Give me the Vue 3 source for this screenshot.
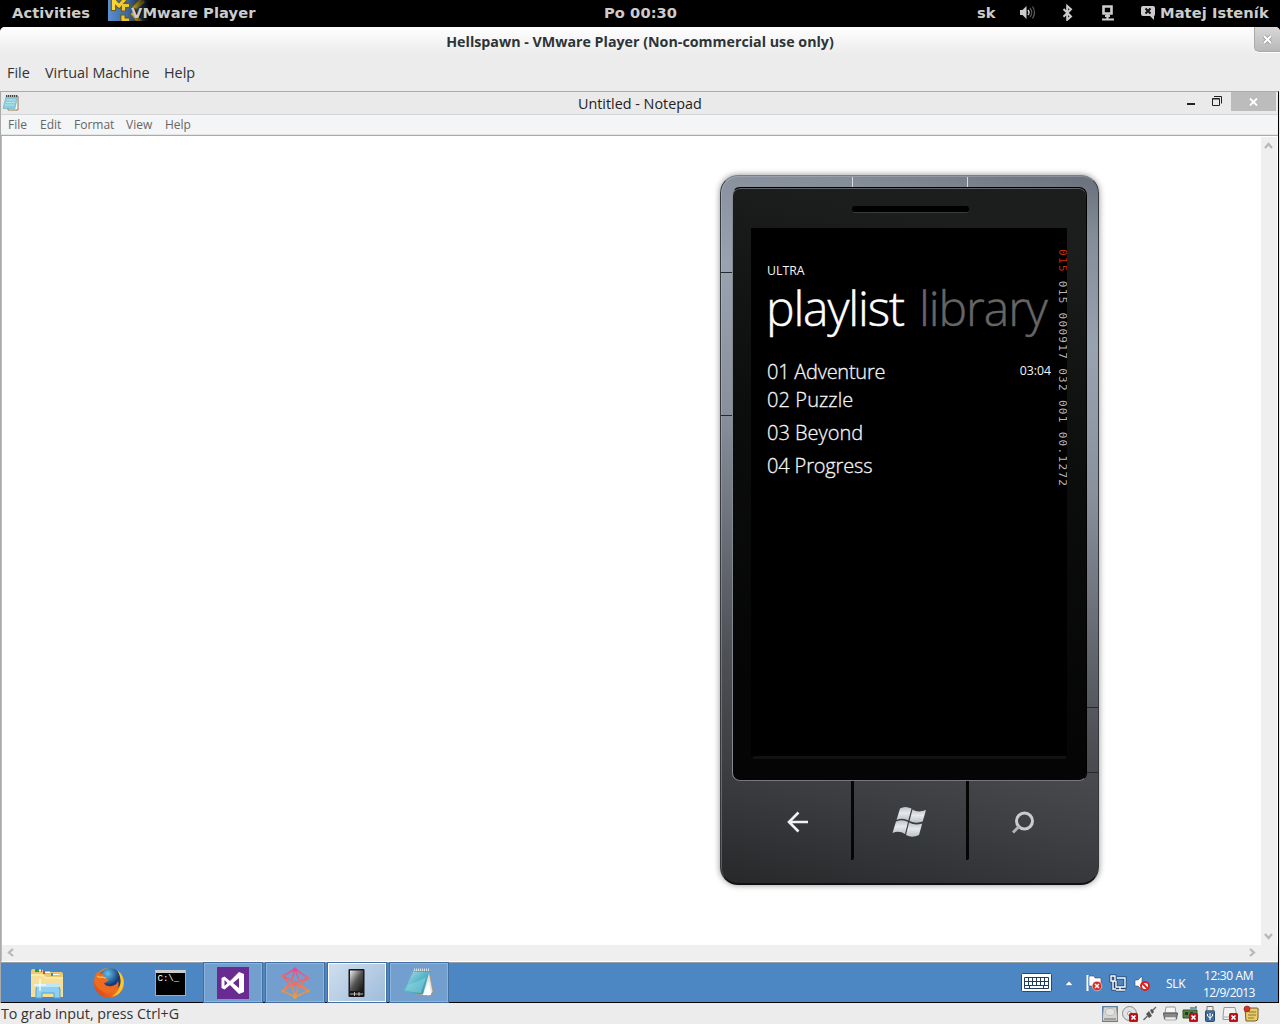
<script setup>
const tracks = ['01 Adventure', '02 Puzzle', '03 Beyond', '04 Progress']
const menus = ['File', 'Edit', 'Format', 'View', 'Help']
</script>

<template>
  <div class="desktop">
    <header class="panel">
      <span class="activities">Activities</span>
      <svg class="app-mark" width="44" height="26" viewBox="0 0 44 26">
        <defs>
          <linearGradient id="markBg" x1="0" y1="0" x2="1" y2="0"><stop offset="0" stop-color="#5b8fd0" /><stop offset=".45" stop-color="#3d699f" /><stop offset=".95" stop-color="#000" /></linearGradient>
          <linearGradient id="markLine" x1="0" y1="0" x2="44" y2="0" gradientUnits="userSpaceOnUse"><stop offset="0" stop-color="#ffdc3c" /><stop offset=".5" stop-color="#e8c12c" /><stop offset=".9" stop-color="#000" /></linearGradient>
        </defs>
        <rect width="44" height="26" fill="url(#markBg)" />
        <g fill="none" stroke-linejoin="round">
          <path d="M5.500 11V0L11 6 17 -1M22 5.500h-6.500v6M15 14.500v5.500h7M25 9l10-9M24 13l10 12" stroke="#695817" stroke-width="5.500" />
          <path d="M5.500 10V0L11 6 17 -1M21 5.500h-5.500v5M15 15.500v4.500h6M25 9l10-9M24 13l10 12" stroke="url(#markLine)" stroke-width="3.200" />
        </g>
      </svg>
      <span class="app-name">VMware Player</span>
      <span class="clock">Po 00:30</span>
      <span class="layout">sk</span>
      <svg class="sys" width="93" height="20" viewBox="1019 3 93 20">
        <path d="M1020 10h2.500l4-4v13l-4-4h-2.500z" fill="#ccc" />
        <path d="M1028 10q2 2.500 0 5" fill="none" stroke="#ccc" stroke-width="1.500" />
        <path d="M1030 8q3.500 4.500 0 9M1032.500 6.500q4 6 0 12" fill="none" stroke="#555" stroke-width="1.300" />
        <path d="M1063.500 9l7.500 7.500-3.800 3.300V6l3.800 3.300-7.500 7.500" fill="none" stroke="#ccc" stroke-width="2" />
        <path d="M1103.500 6.500h8v7h-8z" fill="none" stroke="#ccc" stroke-width="2.600" /><path d="M1107.500 14v5M1102 19.500h12" fill="none" stroke="#ccc" stroke-width="2.200" />
        <path d="M1105 16h5" stroke="#ccc" stroke-width="2" />
      </svg>
      <svg class="chat" width="16" height="16" viewBox="0 0 16 16">
        <path d="M3 1h10q2 0 2 2v6q0 2-1 2v4l-4-4H3q-2 0-2-2V3q0-2 2-2z" fill="#ccc" />
        <path d="M5.500 3.500l5 5M10.500 3.500l-5 5" stroke="#111" stroke-width="2" />
      </svg>
      <span class="user">Matej Isteník</span>
    </header>

    <div class="host">
      <div class="host-title">
        <span>Hellspawn - VMware Player (Non-commercial use only)</span>
        <div class="host-close"><svg width="11" height="11" viewBox="0 0 11 11"><path d="M2 2l7 7M9 2l-7 7" stroke="#999" stroke-width="3.600" /><path d="M2 2l7 7M9 2l-7 7" stroke="#fff" stroke-width="2" /></svg></div>
      </div>
      <nav class="host-menu"><span class="hm1">File</span><span class="hm2">Virtual Machine</span><span>Help</span></nav>
    </div>

    <main class="guest">
      <div class="np-title">
        <svg class="np-icon" width="18" height="18" viewBox="0 0 18 18">
          <path d="M5 2h11v14H6z" fill="#fff" stroke="#95774d" />
          <path d="M4 3h11.500L13 14.500H1z" fill="#8accdb" stroke="#6fb5c6" stroke-width=".7" />
          <path d="M4.500 6h9M4 8.500h9M3 11h9" stroke="#b7e4ee" />
          <path d="M4 2h12" stroke="#444" stroke-width="2" stroke-dasharray="1 1" />
        </svg>
        <span class="np-caption">Untitled - Notepad</span>
        <svg class="np-controls" width="44" height="22" viewBox="1186 92 44 22">
          <path d="M1187 104h8" stroke="#222" stroke-width="2" />
          <path d="M1212.500 98.500h7v7h-7zM1212.500 99h7M1214 96.500h7.500v7" fill="none" stroke="#222" />
        </svg>
        <div class="np-close"><svg width="9" height="8" viewBox="0 0 9 8"><path d="M1 .5l7 7M8 .5l-7 7" stroke="#fff" stroke-width="1.800" /></svg></div>
      </div>
      <nav class="np-menu"><span v-for="m in menus" :key="m" :class="'m-' + m.toLowerCase()">{{ m }}</span></nav>

      <div class="editor">
        <div class="page">
          <section class="phone">
            <i class="notch n1"></i><i class="notch n2"></i>
            <i class="seam s1"></i><i class="seam s2"></i><i class="seam s3"></i><i class="seam s4"></i>
            <div class="glass">
              <div class="speaker"></div>
              <div class="screen">
                <div class="app">
                  <p class="brand">ULTRA</p>
                  <div class="pivot"><span class="on">playlist</span><span class="off">library</span></div>
                  <ul class="tracks">
                    <li v-for="(t, i) in tracks" :key="t"><span :class="'t' + i">{{ t }}</span><time v-if="i === 0">03:04</time></li>
                  </ul>
                </div>
                <div class="counters"><b>015</b> 015 000917 032 001 00.1272</div>
              </div>
              <div class="lip"></div>
            </div>
            <div class="keys">
              <div class="key back"><svg width="24" height="24" viewBox="0 0 24 24"><path d="M22 12H3M12.500 2.500L3 12l9.500 9.500" fill="none" stroke="#f0f1f3" stroke-width="2.600" /></svg></div>
              <div class="key start">
                <svg width="34" height="32" viewBox="0 0 34 32">
                  <defs><linearGradient id="flag" x1="0" y1="0" x2="0" y2="1"><stop offset="0" stop-color="#bfc3c7" /><stop offset=".45" stop-color="#e6e9ec" /><stop offset="1" stop-color="#b9c1c8" /></linearGradient></defs>
                  <g fill="url(#flag)">
                    <path d="M8 2.500Q13-.5 19.500 2.500L16.300 14.500Q11 11.500 4.500 14z" />
                    <path d="M20.500 3.500Q26 7 34 4L30.700 15.500Q24 18 17.500 15z" />
                    <path d="M4 15.500Q11 13 16 16L13 28Q7 24 .5 27z" />
                    <path d="M17 16.500Q23 20 30.200 17.500L27 29Q20 32.500 14 29z" />
                  </g>
                </svg>
              </div>
              <div class="key search"><svg width="24" height="24" viewBox="0 0 24 24"><circle cx="13.500" cy="11" r="8" fill="none" stroke="#c9cbce" stroke-width="3" /><path d="M8 16.500l-6 6" stroke="#b0b2b5" stroke-width="3" /></svg></div>
            </div>
          </section>
        </div>
        <div class="vscroll">
          <svg width="9" height="7" viewBox="0 0 9 7"><path d="M1 6l3.500-4L8 6" fill="none" stroke="#b7b7b7" stroke-width="2.200" /></svg>
          <svg width="9" height="7" viewBox="0 0 9 7"><path d="M1 1l3.500 4L8 1" fill="none" stroke="#b7b7b7" stroke-width="2.200" /></svg>
        </div>
      </div>
      <div class="hscroll">
        <svg width="7" height="9" viewBox="0 0 7 9"><path d="M6 1L2 4.500 6 8" fill="none" stroke="#b7b7b7" stroke-width="2.200" /></svg>
        <svg width="7" height="9" viewBox="0 0 7 9"><path d="M1 1l4 3.500L1 8" fill="none" stroke="#b7b7b7" stroke-width="2.200" /></svg>
      </div>

      <footer class="taskbar">
        <div class="task plain explorer">
          <svg width="34" height="32" viewBox="0 0 34 32">
            <path d="M1 4q0-2 2-2h9l2 3h17q2 0 2 2v22H1z" fill="#e9ca6c" />
            <path d="M5 2h7v3H5z" fill="#25a43a" /><path d="M13 4h7v3h-7z" fill="#d9442b" /><path d="M21 6h8v3h-8z" fill="#2e8fd2" />
            <path d="M9 2.500h2v2H9zM15 4.500h5v2h-5zM23 6.500h6v2h-6z" fill="#fff" />
            <path d="M1 7h12l3 3h17v20H1z" fill="#f5df98" /><path d="M1 8h12l3 3h17" fill="none" stroke="#fff1bd" />
            <path d="M6 31V22q0-3 3-3h17q4 0 4 3v9h-6v-5H12v5z" fill="#8fd0f1" stroke="#4da4d8" />
            <path d="M6 17h23v3H6z" fill="#bce6fa" /><path d="M10 12v12M4 18h12" stroke="#fff" stroke-width="1.200" />
          </svg>
        </div>
        <div class="task plain firefox">
          <svg width="32" height="32" viewBox="0 0 32 32">
            <defs><linearGradient id="fox" x1="1" y1="0" x2="0" y2="1"><stop offset="0" stop-color="#ffd43d" /><stop offset=".4" stop-color="#f58220" /><stop offset="1" stop-color="#d63a1b" /></linearGradient><radialGradient id="globe" cx=".4" cy=".25"><stop offset="0" stop-color="#5fc4ec" /><stop offset="1" stop-color="#173a78" /></radialGradient></defs>
            <circle cx="16" cy="16" r="15" fill="url(#fox)" />
            <circle cx="17" cy="12.500" r="11.500" fill="url(#globe)" />
            <path d="M1 13Q2 8 4 5l1 3q3-2 6-1-1 3 1 4l4 1q-1 3-5 4 2 4 8 3 5-1 6-5 2 5-2 9-7 6-14 1Q2 20 1 13z" fill="#ed6c20" />
            <path d="M24 3q7 5 6.500 14Q29 28 18 30q9-5 9.500-14Q28 9 24 3z" fill="#ffc629" />
            <path d="M4 9q2 2 5 1l4 1" fill="none" stroke="#f9b04b" stroke-width="1.500" />
          </svg>
        </div>
        <div class="task plain cmd">
          <div class="console">C:\_</div>
        </div>
        <div class="task open vs">
          <svg width="32" height="32" viewBox="0 0 32 32"><rect width="32" height="32" fill="#692b91" /><path d="M4.500 11l3-1.500 5.500 4.500 9-9 5 2v18l-5 2-9-9-5.500 4.500-3-1.500z" fill="#fff" /><path d="M7.500 13v6l3-3zM22 11l-6 5 6 5z" fill="#692b91" /></svg>
        </div>
        <div class="task open blend">
          <svg width="30" height="32" viewBox="0 0 30 32">
            <defs><linearGradient id="bl" x1="0" y1="0" x2="0" y2="1"><stop offset="0" stop-color="#e84a91" /><stop offset=".5" stop-color="#f06f61" /><stop offset="1" stop-color="#f59a35" /></linearGradient></defs>
            <g fill="none" stroke="url(#bl)" stroke-width="1.500"><path d="M15 2L3 9l12 7 13-5zM15 2l-4 14M15 2l4 11M15 16L3 24l12 6 13-6zM3 9l6 8-6 7M28 11l-7 6 7 7M11 16l4 14 4-13" /></g>
            <g fill="#f06a68"><circle cx="15" cy="2" r="1.800" fill="#e84a91" /><circle cx="3" cy="9" r="1.500" /><circle cx="28" cy="11" r="1.500" /><circle cx="15" cy="16" r="2.200" /><circle cx="3" cy="24" r="1.500" fill="#f58e45" /><circle cx="28" cy="24" r="1.500" fill="#f58e45" /><circle cx="15" cy="30" r="1.800" fill="#f59a35" /></g>
          </svg>
        </div>
        <div class="task active emu">
          <svg width="20" height="30" viewBox="0 0 20 30">
            <defs><linearGradient id="em" x1="0" y1="0" x2="1" y2="1"><stop offset="0" stop-color="#eee" /><stop offset=".5" stop-color="#555" /><stop offset="1" stop-color="#111" /></linearGradient></defs>
            <rect x="1.500" y="1" width="16" height="28" rx="1" fill="#181818" /><rect x="3" y="2.500" width="13" height="20.500" fill="url(#em)" /><path d="M3 26h13M7.500 24v4M12 24v4" stroke="#ddd" stroke-width=".8" />
          </svg>
        </div>
        <div class="task open pad">
          <svg width="34" height="32" viewBox="0 0 34 32">
            <defs><linearGradient id="nb" x1="0" y1="0" x2="1" y2="1"><stop offset="0" stop-color="#b7e3ec" /><stop offset=".5" stop-color="#58b6c9" /><stop offset="1" stop-color="#278ba9" /></linearGradient></defs>
            <path d="M27 4l4 21-4 4-13-2z" fill="#e6e6e0" stroke="#a69472" stroke-width=".8" /><path d="M21 28l6-14 2 14z" fill="#fff" />
            <path d="M12 3h16l-7 24q-9 1-19-3z" fill="url(#nb)" /><path d="M7 17q7-1 17-7l-5 16q-8 0-16-3z" fill="#9bdce5" opacity=".45" />
            <path d="M12 3h16" stroke="#ddd" stroke-width="3" stroke-dasharray="1 1" /><path d="M12 4.500h16" stroke="#777" stroke-width=".6" />
          </svg>
        </div>

        <svg class="tray" width="138" height="24" viewBox="1018 972 138 24">
          <rect x="1021.500" y="974.500" width="30" height="18" rx="1" fill="#fff" stroke="#284a70" />
          <path d="M1024.500 978.500h24v11h-24zM1024 982.500h25M1024 986.500h25M1028.500 978v8M1032.500 978v8M1036.500 978v8M1040.500 978v8M1044.500 978v8M1029.500 986v4M1043.500 986v4" fill="none" stroke="#203c60" />
          <path d="M1065 986.500l4-4.500 4 4.500z" fill="#fff" stroke="#3b679b" stroke-width=".5" />
          <path d="M1087.500 976v16" stroke="#fff" stroke-width="2" /><path d="M1089 977h5l1 2h6v8h-12z" fill="#fff" stroke="#304f72" stroke-width=".6" />
          <circle cx="1097" cy="987" r="4.800" fill="#d92b24" stroke="#fff" stroke-width=".5" /><path d="M1095 985l4 4m0-4l-4 4" stroke="#fff" stroke-width="1.500" />
          <path d="M1117 979h8v9h-9v-6M1120 988v3M1116 991h9M1111 977h4v5h-4zM1113 982v8h3" fill="none" stroke="#203f65" stroke-width="3" />
          <path d="M1117 979h8v9h-9v-6M1120 988v3M1116 991h9M1111 977h4v5h-4zM1113 982v8h3" fill="none" stroke="#fff" stroke-width="1.400" />
          <path d="M1135 981h3l4-4v14l-4-4h-3z" fill="#fff" stroke="#304f72" stroke-width=".6" />
          <circle cx="1145" cy="987" r="4" fill="#fff" stroke="#e0201d" stroke-width="2" /><path d="M1142 984l6 6" stroke="#e0201d" stroke-width="2" />
        </svg>
        <span class="lang">SLK</span>
        <div class="datetime"><span class="tm">12:30 AM</span><span class="dt">12/9/2013</span></div>
      </footer>
    </main>

    <footer class="status">
      <span>To grab input, press Ctrl+G</span>
      <svg width="160" height="18" viewBox="1101 1005 160 18">
        <rect x="1102" y="1006" width="16" height="16" fill="#5b86b4" /><path d="M1103.500 1007h13l1 10v4h-15v-4z" fill="#d4d4d2" stroke="#777" stroke-width=".6" /><ellipse cx="1110" cy="1012" rx="4.500" ry="3.500" fill="#e4e4e2" stroke="#bbb" /><path d="M1104 1019h12" stroke="#666" />
        <circle cx="1129.500" cy="1013.500" r="7" fill="#e3e3e3" stroke="#888" /><circle cx="1129.500" cy="1013.500" r="2" fill="#fff" stroke="#999" />
        <path d="M1143.500 1020l4-4M1152 1011l4-4" stroke="#666" stroke-width="1.400" /><path d="M1146 1014l3-3 3 5-3 2zM1150 1010l2-1 2 3-2 2z" fill="#555" />
        <path d="M1166 1007h9l1 6h-11z" fill="#f7f7f7" stroke="#999" /><path d="M1163.500 1013h14l-1 6h-12z" fill="#888" stroke="#555" /><path d="M1165 1017h11v3h-11z" fill="#eee" stroke="#888" stroke-width=".6" />
        <path d="M1183 1010h14v8h-14z" fill="#567e42" stroke="#33572a" /><path d="M1185 1012h3v3h-3zM1190 1012h3v3h-3z" fill="#263b24" /><path d="M1190 1008h6v-2" fill="none" stroke="#527ca0" stroke-width="1.500" />
        <rect x="1205.500" y="1010.500" width="9" height="11" rx="1" fill="#426b9a" stroke="#264d79" /><path d="M1207 1006.500h6v4h-6z" fill="#eee" stroke="#777" /><path d="M1210 1013v7M1207.500 1014v2l2.500 2 2.500-2v-2" fill="none" stroke="#fff" />
        <path d="M1224 1007.500h11l2 9v3h-14v-3z" fill="#f2f2f2" stroke="#999" /><path d="M1223 1017h14" stroke="#aaa" />
        <path d="M1245 1008h12q2 0 1 3v7q0 3-3 3h-9z" fill="#e8cc68" stroke="#755e23" /><path d="M1249 1012h7M1248 1015h8M1248 1018h6" stroke="#8d7435" /><circle cx="1247" cy="1009" r="3" fill="#ce3532" stroke="#8a1414" stroke-width=".6" />
        <g v-for="x in [1129, 1189, 1229]" :key="x"><rect :x="x" y="1013" width="9" height="9" rx="1.500" fill="#be1117" /><path :d="`M${x + 2.5} 1015.5l4 4m0-4l-4 4`" stroke="#fff" stroke-width="1.600" /></g>
      </svg>
    </footer>
  </div>
</template>

<style>
body { margin: 0; overflow: hidden; }
</style>

<style scoped>
* { box-sizing: border-box; }
span, time { white-space: nowrap; }
.desktop { width: 1280px; height: 1024px; display: flex; flex-direction: column; background: #ececec; font-family: "Open Sans", "Noto Sans", sans-serif; overflow: hidden; }
svg { display: block; flex: none; }
.panel { height: 27px; flex: none; display: flex; align-items: flex-start; background: #000; color: #ccc; font: bold 14.667px/26px "DejaVu Sans", sans-serif; letter-spacing: .07px; }
.activities { margin-left: 12px; width: 96px; }
.app-mark { margin-right: -21px; }
.app-name { position: relative; width: 473px; text-shadow: 1px 0 1px #000; }
.clock { width: 373px; }
.layout { width: 42px; }
.sys { overflow: visible; margin: 3px 28px 0 0; }
.chat { margin: 5px 4px 0 0; }
.host { height: 64px; flex: none; background: linear-gradient(#fff, #ececec 27px); border-radius: 5px 5px 0 0; box-shadow: 0 -6px 0 #000; position: relative; }
.host-title { height: 30px; display: flex; justify-content: center; color: #2e3436; font: bold 14.250px/30px "Open Sans", sans-serif; position: relative; }
.host-close { position: absolute; right: 0; top: 0; width: 26px; height: 25px; display: flex; align-items: center; justify-content: center; padding-right: 1px; background: linear-gradient(#d8d8d8, #b8b8b8); border: 1px solid #aaa; border-width: 0 0 1px 1px; border-radius: 0 5px 0 5px; box-shadow: 0 1px 0 #fff; }
.host-menu { height: 32px; display: flex; padding-left: 7px; color: #333; font-size: 14.400px; line-height: 32px; }
.hm1 { width: 38px; } .hm2 { width: 119px; }
.guest { width: 1279px; height: 912px; flex: none; display: flex; flex-direction: column; border-left: 1px solid #aaa; border-top: 1px solid #aaa; border-right: 1px solid #000; }
.np-title { height: 23px; flex: none; display: flex; background: #eaeaea; border-bottom: 1px solid #d5d5d5; }
.np-icon { margin: 2px 1px 0 1px; }
.np-caption { width: 608px; margin-left: 557px; color: #222; font-size: 14.350px; line-height: 23px; }
.np-close { width: 45px; height: 19px; margin-left: 1px; display: flex; justify-content: center; align-items: center; background: #bcbcbc; }
.np-menu { height: 21px; flex: none; padding-left: 7px; display: flex; background: #f4f5f7; color: #666; font-size: 12px; line-height: 20px; border-bottom: 1px solid #aaa; box-shadow: inset 0 -1px #e5e5e5; }
.m-file { width: 32px; } .m-edit { width: 34px; } .m-format { width: 52px; } .m-view { width: 39px; }
.editor { flex: 1; display: flex; background: #fff; border-left: 1px solid #bbb; }
.page { width: 1259px; padding: 39px 0 0 718px; }
.vscroll { width: 16px; display: flex; flex-direction: column; justify-content: space-between; align-items: center; padding: 5px 2px 5px 0; background: #efefef; margin-top: 1px; }
.hscroll { height: 17px; flex: none; margin-right: 1px; padding: 0 6px 2px 5px; display: flex; align-items: center; justify-content: space-between; background: #efefef; border-left: 1px solid #bbb; border-bottom: 1px solid #fff; }
.hscroll svg:last-child { margin-right: 15px; }
.phone { position: relative; width: 379px; height: 710px; padding: 11px 11px 0 11px; border-radius: 18px; background: linear-gradient(193deg, #69707b 0%, #858d99 8%, #99a2af 22%, #8a919d 40%, #62666d 60%, #4e5055 71%, #3d3e41 85%, #27282a 100%); border: 1px solid #34373b; border-top-color: #777e88; border-bottom: 2px solid #101112; box-shadow: 0 0 6px rgba(0,0,0,.45), inset 1px 1px 0 rgba(200,206,214,.3); }
.glass { height: 594px; width: 355px; padding: 20px 0 0 18px; border-radius: 8px; background: linear-gradient(192deg, #1c1d1d 10%, #151616 22%, #0b0d0c 45%, #050505 85%); border: 1px solid #000; border-left-color: #858a91; border-bottom-color: #77787b; box-shadow: inset 0 1px #626466; }
.speaker { width: 117px; height: 7px; margin: -2px 0 0 101px; border-radius: 3px; background: #000; border-bottom: 1px solid #3b3c3c; }
.screen { width: 316px; height: 528px; margin-top: 15px; display: flex; background: #000; overflow: hidden; }
.app { width: 306px; flex: none; padding: 34px 0 0 16px; color: #f5f5f5; }
.brand { margin: 0; height: 17px; font-size: 12.300px; line-height: 17px; }
.pivot { height: 74px; display: flex; font: 300 48px/58px "Open Sans", sans-serif; -webkit-text-stroke: .5px currentColor; }
.on { width: 152px; margin-left: -1px; letter-spacing: -1.150px; color: #fff; } .off { color: #666; letter-spacing: -1.050px; margin-left: 1px; }
.tracks { margin: 0; padding: 0; list-style: none; font: 300 20px/33px "Open Sans", sans-serif; -webkit-text-stroke: .3px currentColor; }
.tracks li { height: 33px; display: flex; justify-content: space-between; padding-right: 6px; }
.tracks li:first-child { height: 28px; margin-top: 2px; }
.tracks time { font: 400 12.300px/31px "Open Sans", sans-serif; -webkit-text-stroke: 0; }
.t0 { letter-spacing: -.250px; } .t1 { letter-spacing: .1px; } .t3 { letter-spacing: -.150px; }
.counters { height: 250px; margin: 21px 0 0 0; writing-mode: vertical-rl; color: #b5b5b5; font: 11px/10px "DejaVu Sans Mono", monospace; letter-spacing: 1.320px; white-space: nowrap; }
.counters b { color: #c62e08; font-weight: 400; }
.lip { height: 3px; width: 313px; margin-left: 2px; background: #111; }
.notch { position: absolute; top: 1px; width: 1px; height: 10px; background: #d5d9de; }
.n1 { left: 131px; } .n2 { left: 246px; }
.seam { position: absolute; width: 11px; height: 1px; background: #25282c; }
.s1 { left: 0; top: 96px; } .s2 { left: 0; top: 239px; } .s3 { right: 0; top: 531px; } .s4 { right: 0; top: 596px; }
.keys { display: flex; height: 79px; }
.key { display: flex; align-items: center; justify-content: center; padding-top: 3px; border-right: 3px solid #050505; border-radius: 0 0 2px 0; }
.back { width: 122px; padding-left: 12px; } .start { width: 115px; padding-right: 2px; } .search { width: 108px; border: 0; }
.taskbar { height: 41px; flex: none; display: flex; align-items: stretch; background: #4d87c3; border-top: 1px solid #989fa6; border-bottom: 1px solid #050505; color: #fff; }
.task { display: flex; width: 58px; align-items: center; justify-content: center; margin-right: 4px; }
.open { background: #729fce; border: 1px solid #8eb4dc; box-shadow: 0 0 0 1px #426f9f; }
.active { background: linear-gradient(135deg, #cfdeed, #9fbddb); border: 1px solid #fff; box-shadow: 0 0 0 1px #426f9f; }
.explorer { margin-left: 17px; }
.cmd { padding-right: 2px; }
.console { width: 31px; height: 26px; border: 1px solid #aaa; border-top: 3px solid #ccc; background: #000; color: #fff; font: 9px/11px "Liberation Mono", monospace; padding: 1px 0 0 2px; }
.tray { margin: 8px 10px 0 auto; }
.lang { font-size: 12px; line-height: 41px; width: 37px; letter-spacing: -.3px; }
.datetime { width: 75px; display: flex; flex-direction: column; font-size: 12px; line-height: 17px; padding-top: 4px; letter-spacing: -.35px; }
.tm { padding-left: 1px; } .dt { letter-spacing: -.550px; }
.status { height: 21px; display: flex; justify-content: space-between; padding: 2px 19px 0 1px; color: #333; font-size: 14.250px; line-height: 17px; background: #ececec; }
</style>
